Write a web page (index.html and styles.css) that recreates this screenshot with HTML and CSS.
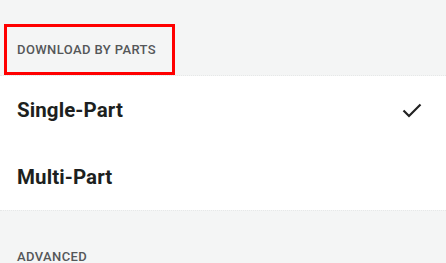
FILE: index.html
```html
<!DOCTYPE html>
<html>
<head>
<meta charset="utf-8">
<link rel="stylesheet" href="styles.css">
</head>
<body>
<div class="page">
  <div class="section-head">
    <div class="label highlighted">DOWNLOAD BY PARTS</div>
  </div>
  <div class="list">
    <div class="row">
      <span class="row-title">Single-Part</span>
      <svg class="check" width="20" height="16" viewBox="0 0 20 16"><path d="M1.5 8.5 L7 14 L18.5 2.5" fill="none" stroke="#222" stroke-width="2.2"/></svg>
    </div>
    <div class="row">
      <span class="row-title">Multi-Part</span>
    </div>
  </div>
  <div class="section-head second">
    <div class="label">ADVANCED</div>
  </div>
</div>
</body>
</html>
```
FILE: styles.css
```css
html, body {
  margin: 0;
  padding: 0;
  background: #f4f5f5;
  font-family: Roboto, "Liberation Sans", sans-serif;
}
.page {
  width: 446px;
  height: 263px;
  overflow: hidden;
}
.section-head {
  height: 76px;
  box-sizing: border-box;
  padding: 24px 0 0 4px;
  border-bottom: 1px dotted #e6e8e8;
}
.label {
  box-sizing: border-box;
  width: 171px;
  height: 51px;
  display: flex;
  align-items: center;
  font-size: 13px;
  font-weight: 500;
  color: #555759;
  letter-spacing: 0.4px;
  border: 3px solid transparent;
  padding-left: 10px;
}
.label.highlighted {
  border-color: #ff0000;
}
.list {
  background: #ffffff;
}
.row {
  height: 67px;
  display: flex;
  align-items: center;
  justify-content: space-between;
  padding: 0 24px 0 17px;
}
.row-title {
  font-size: 20.5px;
  font-weight: 700;
  color: #1d1f20;
  letter-spacing: 0.1px;
}
.check {
  display: block;
  margin-top: 1px;
}
.section-head.second {
  border-top: 1px dotted #e6e8e8;
  border-bottom: none;
  padding-top: 20px;
}
```
